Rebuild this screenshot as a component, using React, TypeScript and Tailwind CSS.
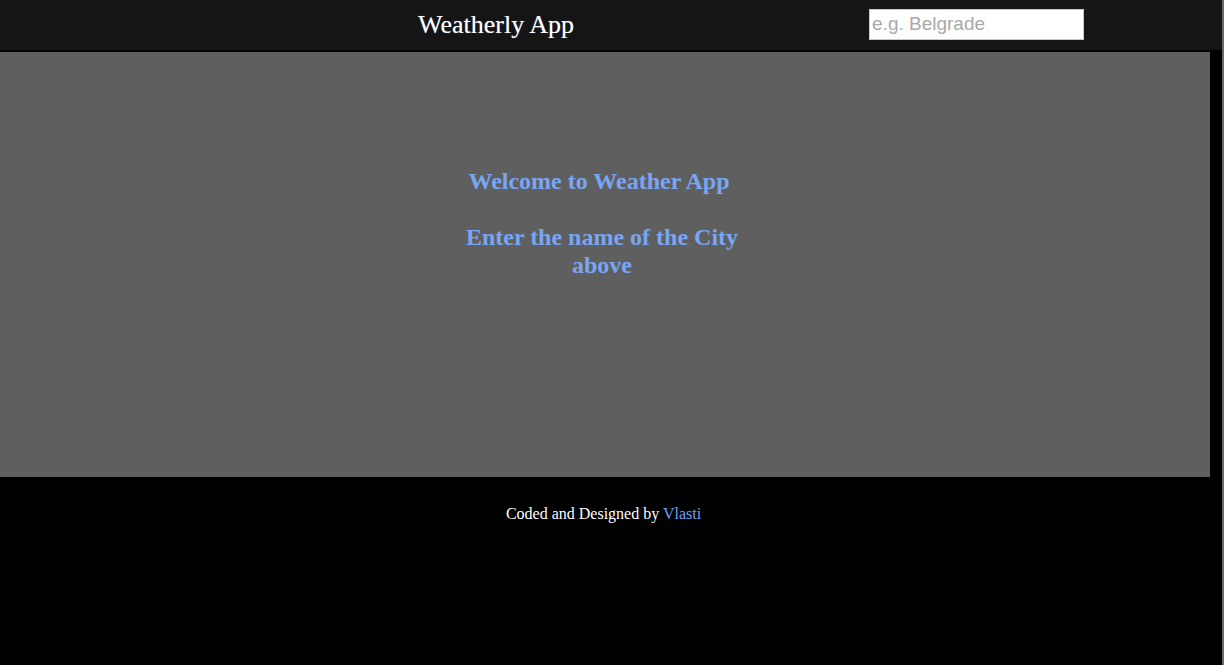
export default function App() {
  return (
    <div className="flex min-h-[665px] w-full bg-black font-['Liberation_Serif',serif]">
      <div className="flex w-[1222px] flex-col">
        <header className="flex h-[52px] items-center border-b-2 border-black bg-[#151515]">
          <h1 className="ml-[418px] text-[26px] leading-none text-white [text-shadow:0_0_1px_rgba(160,180,255,0.6)]">
            Weatherly App
          </h1>
          <input
            type="text"
            placeholder="e.g. Belgrade"
            className="mb-[2px] ml-[295px] h-[31px] w-[215px] border border-[#c8c8c8] bg-white px-[2px] font-['Liberation_Sans',sans-serif] text-[19px] text-black outline-none placeholder:text-[#a9a9a9]"
          />
        </header>

        <main className="flex h-[425px] w-[1210px] flex-col items-center bg-[#5f5f5f] pr-[6px] pt-[115px]">
          <div className="flex w-[300px] flex-col items-center text-center text-[24px] font-bold leading-[28px] text-[#78a6f4]">
            <h2 className="mr-[6px]">Welcome to Weather App</h2>
            <h2 className="mt-[28px] w-[290px]">Enter the name of the City above</h2>
          </div>
        </main>

        <footer className="w-[1210px] pr-[3px] pt-[27px] text-center text-[16px] leading-[20px] text-white">
          Coded and Designed by <a className="text-[#6ea2f7]">Vlasti</a>
        </footer>
      </div>
      <div className="w-[2px] bg-[#6a6a6a]" />
    </div>
  );
}
